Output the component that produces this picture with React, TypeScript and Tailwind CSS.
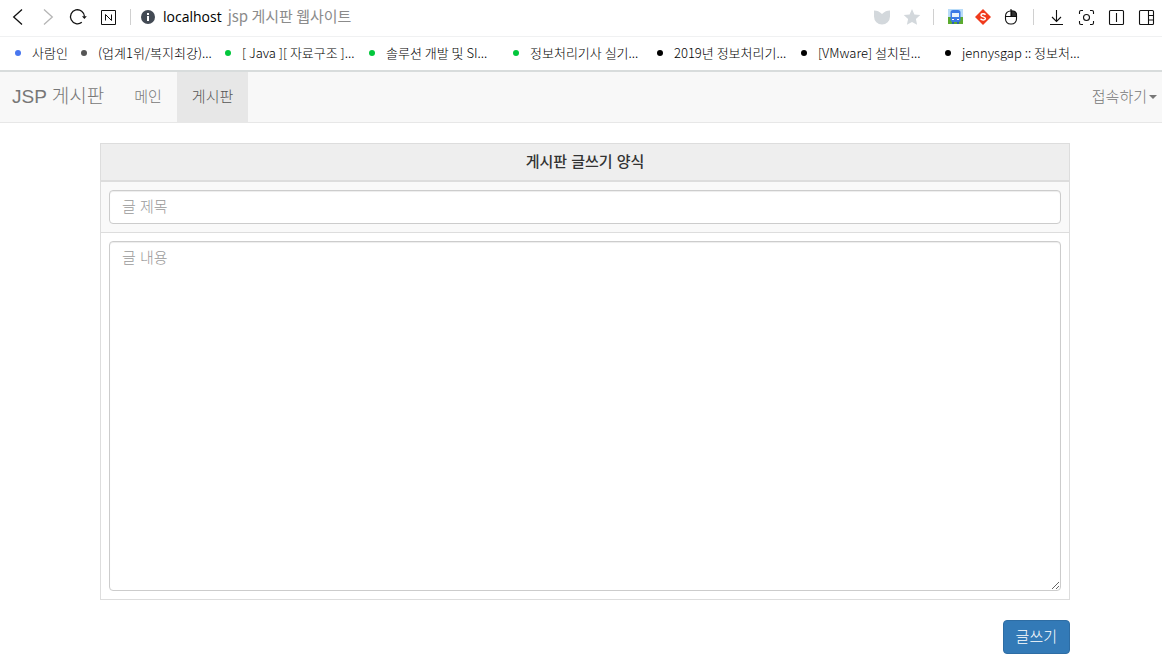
import React, { useState } from "react";

const bookmarks = [
  { title: "사람인", dot: "bg-[#4876ef]", width: "w-[66px]" },
  { title: "(업계1위/복지최강)...", dot: "bg-[#555555]", width: "w-36" },
  { title: "[ Java ][ 자료구조 ]...", dot: "bg-[#03c73c]", width: "w-36" },
  { title: "솔루션 개발 및 SI...", dot: "bg-[#03c73c]", width: "w-36" },
  { title: "정보처리기사 실기...", dot: "bg-[#03c73c]", width: "w-36" },
  { title: "2019년 정보처리기...", dot: "bg-black", width: "w-36" },
  { title: "[VMware] 설치된...", dot: "bg-black", width: "w-36" },
  { title: "jennysgap :: 정보처...", dot: "bg-black", width: "w-36" },
];

type IconButtonProps = {
  label: string;
  children: React.ReactNode;
};

const IconButton: React.FC<IconButtonProps> = ({ label, children }) => (
  <button type="button" aria-label={label} className="block shrink-0">
    <svg
      width="18"
      height="18"
      viewBox="0 0 18 18"
      fill="none"
      stroke="#111111"
      strokeWidth="1.1"
    >
      {children}
    </svg>
  </button>
);

const Toolbar: React.FC = () => (
  <div className="flex h-[37px] items-center border-b border-[#f0f1f2] pr-[7px] pb-[3px] pl-[9px]">
    <div className="flex items-center gap-3">
      <IconButton label="뒤로">
        <path d="M13 1.500 4.700 9l8.300 7.500" strokeWidth="1.3" />
      </IconButton>
      <IconButton label="앞으로">
        <path d="M5 1.500 13.300 9 5 16.500" stroke="#b5b5b5" strokeWidth="1.3" />
      </IconButton>
      <IconButton label="새로고침">
        <path d="M12.800 14.300A7 7 0 1 1 15.500 8.500" strokeWidth="1.300" />
        <path d="M13 8.200h4.800l-2.400 2.800z" fill="#111111" stroke="none" />
      </IconButton>
      <IconButton label="네이버">
        <path d="M2.500 2.500h14v14h-14z" strokeWidth="1" />
        <path d="M6.500 12.500v-6l6 6v-6" strokeWidth="1" />
      </IconButton>
    </div>
    <span className="ml-[13px] h-4 w-px bg-[#d0d0d0]" />
    <svg className="ml-[10px] shrink-0" width="14" height="14" viewBox="0 0 14 14">
      <circle cx="7" cy="7" r="7" fill="#434a54" />
      <path d="M6 3h2v2H6zM6 6h2v5H6z" fill="#ffffff" />
    </svg>
    <p className="ml-2 flex items-baseline gap-[6px] leading-5 whitespace-nowrap">
      <span className="text-[14px] text-black">localhost</span>
      <span className="font-['Noto_Sans_CJK_KR',sans-serif] text-[15px] text-[#8b8b8b]">
        jsp 게시판 웹사이트
      </span>
    </p>

    <div className="ml-auto flex items-center gap-3">
      <IconButton label="보안">
        <path
          d="M1 2.500C4 2.500 6.500 3.500 9 6c2.500-2.500 5-3.500 8-3.500v6a8 8 0 0 1-16 0z"
          fill="#d3d8dc"
          stroke="none"
        />
      </IconButton>
      <IconButton label="즐겨찾기">
        <path
          d="m9 1 2.400 5.400 5.900.6-4.400 4 1.200 5.800L9 13.900l-5.100 2.900L5.100 11 .7 7l5.900-.6z"
          fill="#d3d8dc"
          stroke="none"
        />
      </IconButton>
    </div>
    <span className="mx-3 h-4 w-px bg-[#d0d0d0]" />
    <div className="flex items-center gap-[10px]">
      <IconButton label="교통">
        <path d="M2 1h15v11H2z" fill="#b9dcf8" stroke="none" />
        <path d="M2 9h15v7H2z" fill="#5bab2f" stroke="none" />
        <rect x="4.500" y="2" width="10" height="12" rx="2.500" fill="#3c79e6" stroke="none" />
        <path d="M6 5h7v4H6z" fill="#e9f3fc" stroke="none" />
        <path d="M6 11h2v1H6zM11 11h2v1h-2z" fill="#ffffff" stroke="none" />
        <path d="M6 14h2v2H6zM11 14h2v2h-2z" fill="#2f5fae" stroke="none" />
      </IconButton>
      <IconButton label="검색 도구">
        <path d="m9 1 8 8-8 8-8-8z" fill="#f03a1c" stroke="none" />
        <path
          d="M11.500 6.800C10.500 5.500 7 5.400 7 7.300c0 2 4.400 1.200 4.400 3.200 0 1.900-3.500 1.800-4.900.3"
          stroke="#ffffff"
          strokeWidth="1.500"
        />
      </IconButton>
      <IconButton label="마우스 제스처">
        <rect x="3.500" y="3" width="11" height="13" rx="5" />
        <path d="M9 1v7.500M3.500 8.500h11" />
        <path d="M9.500 3h1.500a3.500 3.500 0 0 1 3.500 3.500v2h-5z" fill="#333333" />
      </IconButton>
    </div>
    <span className="mx-[13px] h-4 w-px bg-[#d0d0d0]" />
    <div className="flex items-center gap-3">
      <IconButton label="다운로드">
        <path d="M9.500 2v11M5 9l4.500 4.500L14 9M3 16.500h13" />
      </IconButton>
      <IconButton label="캡처">
        <path d="M2.500 6V4a1.500 1.500 0 0 1 1.500-1.500h2M13 2.500h2A1.500 1.500 0 0 1 16.500 4v2M16.500 13v2a1.500 1.500 0 0 1-1.500 1.500h-2M6 16.500H4A1.500 1.500 0 0 1 2.500 15v-2" />
        <circle cx="9.500" cy="9.500" r="3" />
      </IconButton>
      <IconButton label="화면 분할">
        <rect x="2.500" y="2.500" width="14" height="14" rx="1" />
        <path d="M9.500 5v9" />
      </IconButton>
      <IconButton label="사이드바">
        <rect x="2.500" y="2.500" width="14" height="14" rx="1" />
        <path d="M11.500 2.500v14M11.500 7.500h5M11.500 12h5" />
      </IconButton>
    </div>
  </div>
);

const App: React.FC = () => {
  const [formData, setFormData] = useState({ title: "", content: "" });

  const handleChange = (
    e: React.ChangeEvent<HTMLInputElement | HTMLTextAreaElement>
  ) => {
    setFormData({ ...formData, [e.target.name]: e.target.value });
  };

  const handleSubmit = (e: React.FormEvent) => {
    e.preventDefault();
  };

  return (
    <div className="bg-white font-['Open_Sans','Noto_Sans_CJK_KR',sans-serif] text-[#333333]">
      <header>
        <Toolbar />
        <div className="flex h-[35px] items-center overflow-hidden border-b-2 border-[#d8dcdc] pb-[2px] pl-[15px] font-['Noto_Sans_CJK_KR',sans-serif] text-[13px] leading-5 font-light text-black">
          {bookmarks.map((bookmark) => (
            <a
              key={bookmark.title}
              href="#"
              className={`flex shrink-0 items-center gap-[11px] whitespace-nowrap ${bookmark.width}`}
            >
              <span className={`size-[6px] shrink-0 rounded-full ${bookmark.dot}`} />
              {bookmark.title}
            </a>
          ))}
        </div>
      </header>

      <nav className="flex h-[51px] items-stretch border-b border-[#e7e7e7] bg-[#f8f8f8] font-['Liberation_Sans','Noto_Sans_CJK_KR',sans-serif] text-[15px] font-light text-[#777777]">
        <a href="#" className="pr-[15px] pl-3 text-[19px] leading-[50px]">
          JSP 게시판
        </a>
        <a href="#" className="px-[15px] leading-[50px]">
          메인
        </a>
        <a href="#" className="bg-[#e7e7e7] px-[15px] leading-[50px] text-[#555555]">
          게시판
        </a>
        <button type="button" className="ml-auto flex items-center gap-[2px] pr-[5px]">
          접속하기
          <span className="border-x-4 border-t-4 border-x-transparent border-t-[#777777]" />
        </button>
      </nav>

      <form
        onSubmit={handleSubmit}
        className="mt-5 mr-[92px] ml-[100px] font-['Liberation_Sans','Noto_Sans_CJK_KR',sans-serif] text-[15px] font-light"
      >
        <table className="w-full border-collapse border border-[#dddddd] text-center">
          <thead>
            <tr>
              <th className="border-b-2 border-[#dddddd] bg-[#eeeeee] p-2 leading-5 font-medium">
                게시판 글쓰기 양식
              </th>
            </tr>
          </thead>
          <tbody>
            <tr className="border-b border-[#dddddd] bg-[#f9f9f9]">
              <td className="p-2">
                <input
                  type="text"
                  name="title"
                  aria-label="글 제목"
                  value={formData.title}
                  onChange={handleChange}
                  placeholder="글 제목"
                  maxLength={50}
                  className="block h-[34px] w-full rounded border border-[#cccccc] bg-white px-3 pb-[2px] shadow-[inset_0_1px_1px_rgba(0,0,0,0.075)] placeholder:text-[#999999]"
                />
              </td>
            </tr>
            <tr>
              <td className="p-2">
                <textarea
                  name="content"
                  aria-label="글 내용"
                  value={formData.content}
                  onChange={handleChange}
                  placeholder="글 내용"
                  maxLength={2048}
                  className="block h-[350px] w-full rounded border border-[#cccccc] bg-white px-3 py-[6px] leading-5 shadow-[inset_0_1px_1px_rgba(0,0,0,0.075)] placeholder:text-[#999999]"
                />
              </td>
            </tr>
          </tbody>
        </table>
        <button
          type="submit"
          className="mt-5 ml-auto block rounded border border-[#2e6da4] bg-[#337ab7] px-3 py-[6px] leading-5 text-white"
        >
          글쓰기
        </button>
      </form>
    </div>
  );
};

export default App;
